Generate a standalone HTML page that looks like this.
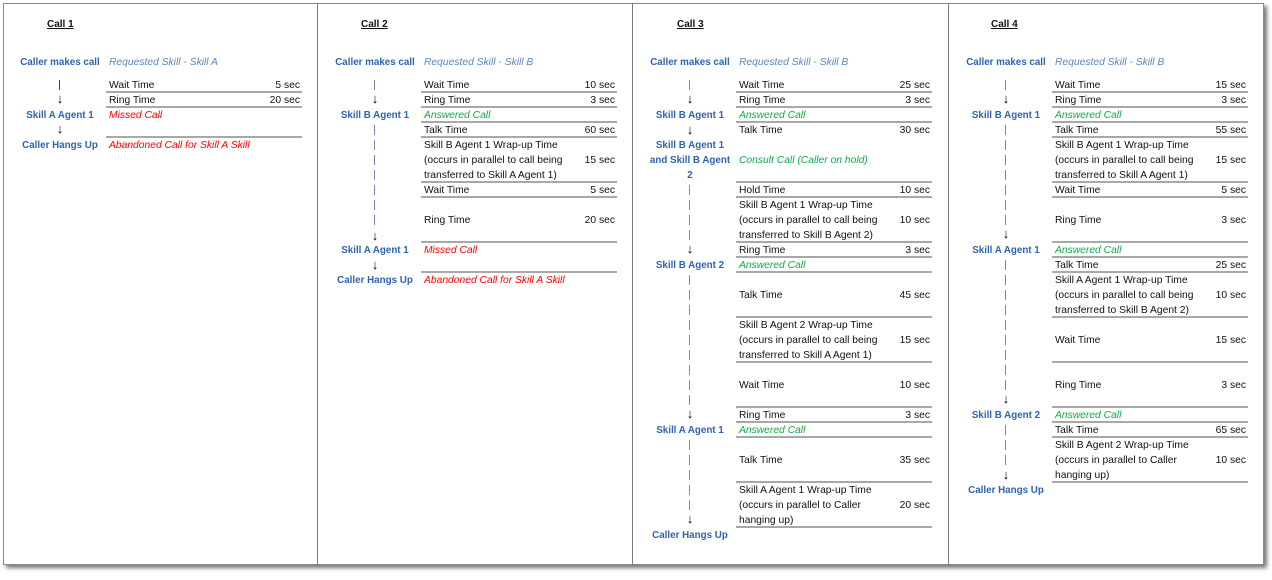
<!DOCTYPE html>
<html><head><meta charset="utf-8"><style>
*{margin:0;padding:0;box-sizing:border-box}
body{width:1272px;height:579px;background:#fff;font-family:"Liberation Sans",sans-serif;font-size:10.3px;color:#111;position:relative;overflow:hidden}
.frame{position:absolute;left:3px;top:3px;width:1261px;height:562px;border:1px solid #8a8a8a;box-shadow:3px 3px 4px #777;background:#fff}
.div{position:absolute;top:3px;width:1px;height:562px;background:#7a7a7a}
.col{position:absolute;top:1px;width:315px;height:579px}
.title{position:absolute;top:18px;font-weight:bold;text-decoration:underline;font-size:10px}
.lab{position:absolute;left:2px;width:110px;text-align:center;color:#2e64b0;font-weight:bold;font-size:9.8px;line-height:15px;height:15px;white-space:nowrap}
.r{position:absolute;left:106px;width:191px;line-height:15px;height:15px;white-space:nowrap}
.r b{position:absolute;right:0;top:0;font-weight:normal}
.ln{position:absolute;left:103px;width:196px;height:2px;background:#a8a8a8}
.sk{color:#5b86c0;font-style:italic}
.g{color:#13a84a;font-style:italic}
.red{color:#f00;font-style:italic}
.ar{position:absolute;left:50px;width:14px;text-align:center;font-size:13px;font-weight:bold;line-height:15px;height:15px;color:#000}
.pipe{position:absolute;left:56px;width:1px;height:10px;background:#444}
.dash{position:absolute;left:56px;width:1px}
.p{background:repeating-linear-gradient(to bottom,#8a7aa8 0 10px,transparent 10px 15px)}
.m{background:repeating-linear-gradient(to bottom,#b07a88 0 10px,transparent 10px 15px)}
.ml{line-height:15px;height:45px}
</style></head><body>
<div class="frame"></div>
<div class="div" style="left:317px"></div>
<div class="div" style="left:632px"></div>
<div class="div" style="left:948px"></div>

<!-- Col 1 -->
<div class="col" style="left:3px">
<div class="title" style="left:44px">Call 1</div>
<div class="lab" style="top:54px">Caller makes call</div>
<div class="r sk" style="top:54px">Requested Skill - Skill A</div>
<div class="pipe" style="top:79px"></div>
<div class="ar" style="top:90px">↓</div>
<div class="r" style="top:77px">Wait Time<b>5 sec</b></div><div class="ln" style="top:90px"></div>
<div class="r" style="top:92px">Ring Time<b>20 sec</b></div><div class="ln" style="top:105px"></div>
<div class="lab" style="top:107px">Skill A Agent 1</div>
<div class="r red" style="top:107px">Missed Call</div>
<div class="ar" style="top:120px">↓</div>
<div class="ln" style="top:135px"></div>
<div class="lab" style="top:137px">Caller Hangs Up</div>
<div class="r red" style="top:137px">Abandoned Call for Skill A Skill</div>
</div>

<!-- Col 2 -->
<div class="col" style="left:318px">
<div class="title" style="left:43px">Call 2</div>
<div class="lab" style="top:54px">Caller makes call</div>
<div class="r sk" style="top:54px">Requested Skill - Skill B</div>
<div class="dash p" style="top:79px;height:10px"></div>
<div class="ar" style="top:90px">↓</div>
<div class="r" style="top:77px">Wait Time<b>10 sec</b></div><div class="ln" style="top:90px"></div>
<div class="r" style="top:92px">Ring Time<b>3 sec</b></div><div class="ln" style="top:105px"></div>
<div class="lab" style="top:107px">Skill B Agent 1</div>
<div class="r g" style="top:107px">Answered Call</div><div class="ln" style="top:120px"></div>
<div class="dash p" style="top:124px;height:104px"></div>
<div class="r" style="top:122px">Talk Time<b>60 sec</b></div><div class="ln" style="top:135px"></div>
<div class="r ml" style="top:137px">Skill B Agent 1 Wrap-up Time<br>(occurs in parallel to call being<br>transferred to Skill A Agent 1)<b style="top:15px">15 sec</b></div><div class="ln" style="top:180px"></div>
<div class="r" style="top:182px">Wait Time<b>5 sec</b></div><div class="ln" style="top:195px"></div>
<div class="r" style="top:212px">Ring Time<b>20 sec</b></div><div class="ln" style="top:240px"></div>
<div class="ar" style="top:227px">↓</div>
<div class="lab" style="top:242px">Skill A Agent 1</div>
<div class="r red" style="top:242px">Missed Call</div>
<div class="ar" style="top:256px">↓</div>
<div class="ln" style="top:270px"></div>
<div class="lab" style="top:272px">Caller Hangs Up</div>
<div class="r red" style="top:272px">Abandoned Call for Skill A Skill</div>
</div>

<!-- Col 3 -->
<div class="col" style="left:633px">
<div class="title" style="left:44px">Call 3</div>
<div class="lab" style="top:54px">Caller makes call</div>
<div class="r sk" style="top:54px">Requested Skill - Skill B</div>
<div class="dash m" style="top:79px;height:10px"></div>
<div class="ar" style="top:90px">↓</div>
<div class="r" style="top:77px">Wait Time<b>25 sec</b></div><div class="ln" style="top:90px"></div>
<div class="r" style="top:92px">Ring Time<b>3 sec</b></div><div class="ln" style="top:105px"></div>
<div class="lab" style="top:107px">Skill B Agent 1</div>
<div class="r g" style="top:107px">Answered Call</div><div class="ln" style="top:120px"></div>
<div class="ar" style="top:121px">↓</div>
<div class="r" style="top:122px">Talk Time<b>30 sec</b></div>
<div class="lab" style="top:137px">Skill B Agent 1</div>
<div class="lab" style="top:152px">and Skill B Agent</div>
<div class="lab" style="top:167px">2</div>
<div class="r g" style="top:152px">Consult Call (Caller on hold)</div><div class="ln" style="top:180px"></div>
<div class="dash m" style="top:184px;height:55px"></div>
<div class="r" style="top:182px">Hold Time<b>10 sec</b></div><div class="ln" style="top:195px"></div>
<div class="r ml" style="top:197px">Skill B Agent 1 Wrap-up Time<br>(occurs in parallel to call being<br>transferred to Skill B Agent 2)<b style="top:15px">10 sec</b></div><div class="ln" style="top:240px"></div>
<div class="ar" style="top:240px">↓</div>
<div class="r" style="top:242px">Ring Time<b>3 sec</b></div><div class="ln" style="top:255px"></div>
<div class="lab" style="top:257px">Skill B Agent 2</div>
<div class="r g" style="top:257px">Answered Call</div><div class="ln" style="top:270px"></div>
<div class="dash m" style="top:274px;height:130px"></div>
<div class="r" style="top:287px">Talk Time<b>45 sec</b></div><div class="ln" style="top:315px"></div>
<div class="r ml" style="top:317px">Skill B Agent 2 Wrap-up Time<br>(occurs in parallel to call being<br>transferred to Skill A Agent 1)<b style="top:15px">15 sec</b></div><div class="ln" style="top:360px"></div>
<div class="r" style="top:377px">Wait Time<b>10 sec</b></div><div class="ln" style="top:405px"></div>
<div class="ar" style="top:405px">↓</div>
<div class="r" style="top:407px">Ring Time<b>3 sec</b></div><div class="ln" style="top:420px"></div>
<div class="lab" style="top:422px">Skill A Agent 1</div>
<div class="r g" style="top:422px">Answered Call</div><div class="ln" style="top:435px"></div>
<div class="dash m" style="top:439px;height:70px"></div>
<div class="r" style="top:452px">Talk Time<b>35 sec</b></div><div class="ln" style="top:480px"></div>
<div class="r ml" style="top:482px">Skill A Agent 1 Wrap-up Time<br>(occurs in parallel to Caller<br>hanging up)<b style="top:15px">20 sec</b></div><div class="ln" style="top:525px"></div>
<div class="ar" style="top:510px">↓</div>
<div class="lab" style="top:527px">Caller Hangs Up</div>
</div>

<!-- Col 4 -->
<div class="col" style="left:949px">
<div class="title" style="left:42px">Call 4</div>
<div class="lab" style="top:54px">Caller makes call</div>
<div class="r sk" style="top:54px">Requested Skill - Skill B</div>
<div class="dash p" style="top:79px;height:10px"></div>
<div class="ar" style="top:90px">↓</div>
<div class="r" style="top:77px">Wait Time<b>15 sec</b></div><div class="ln" style="top:90px"></div>
<div class="r" style="top:92px">Ring Time<b>3 sec</b></div><div class="ln" style="top:105px"></div>
<div class="lab" style="top:107px">Skill B Agent 1</div>
<div class="r g" style="top:107px">Answered Call</div><div class="ln" style="top:120px"></div>
<div class="dash p" style="top:124px;height:100px"></div>
<div class="r" style="top:122px">Talk Time<b>55 sec</b></div><div class="ln" style="top:135px"></div>
<div class="r ml" style="top:137px">Skill B Agent 1 Wrap-up Time<br>(occurs in parallel to call being<br>transferred to Skill A Agent 1)<b style="top:15px">15 sec</b></div><div class="ln" style="top:180px"></div>
<div class="r" style="top:182px">Wait Time<b>5 sec</b></div><div class="ln" style="top:195px"></div>
<div class="r" style="top:212px">Ring Time<b>3 sec</b></div><div class="ln" style="top:240px"></div>
<div class="ar" style="top:225px">↓</div>
<div class="lab" style="top:242px">Skill A Agent 1</div>
<div class="r g" style="top:242px">Answered Call</div><div class="ln" style="top:255px"></div>
<div class="dash p" style="top:259px;height:130px"></div>
<div class="r" style="top:257px">Talk Time<b>25 sec</b></div><div class="ln" style="top:270px"></div>
<div class="r ml" style="top:272px">Skill A Agent 1 Wrap-up Time<br>(occurs in parallel to call being<br>transferred to Skill B Agent 2)<b style="top:15px">10 sec</b></div><div class="ln" style="top:315px"></div>
<div class="r" style="top:332px">Wait Time<b>15 sec</b></div><div class="ln" style="top:360px"></div>
<div class="r" style="top:377px">Ring Time<b>3 sec</b></div><div class="ln" style="top:405px"></div>
<div class="ar" style="top:390px">↓</div>
<div class="lab" style="top:407px">Skill B Agent 2</div>
<div class="r g" style="top:407px">Answered Call</div><div class="ln" style="top:420px"></div>
<div class="dash p" style="top:424px;height:40px"></div>
<div class="r" style="top:422px">Talk Time<b>65 sec</b></div><div class="ln" style="top:435px"></div>
<div class="r ml" style="top:437px">Skill B Agent 2 Wrap-up Time<br>(occurs in parallel to Caller<br>hanging up)<b style="top:15px">10 sec</b></div><div class="ln" style="top:480px"></div>
<div class="ar" style="top:466px">↓</div>
<div class="lab" style="top:482px">Caller Hangs Up</div>
</div>
</body></html>
